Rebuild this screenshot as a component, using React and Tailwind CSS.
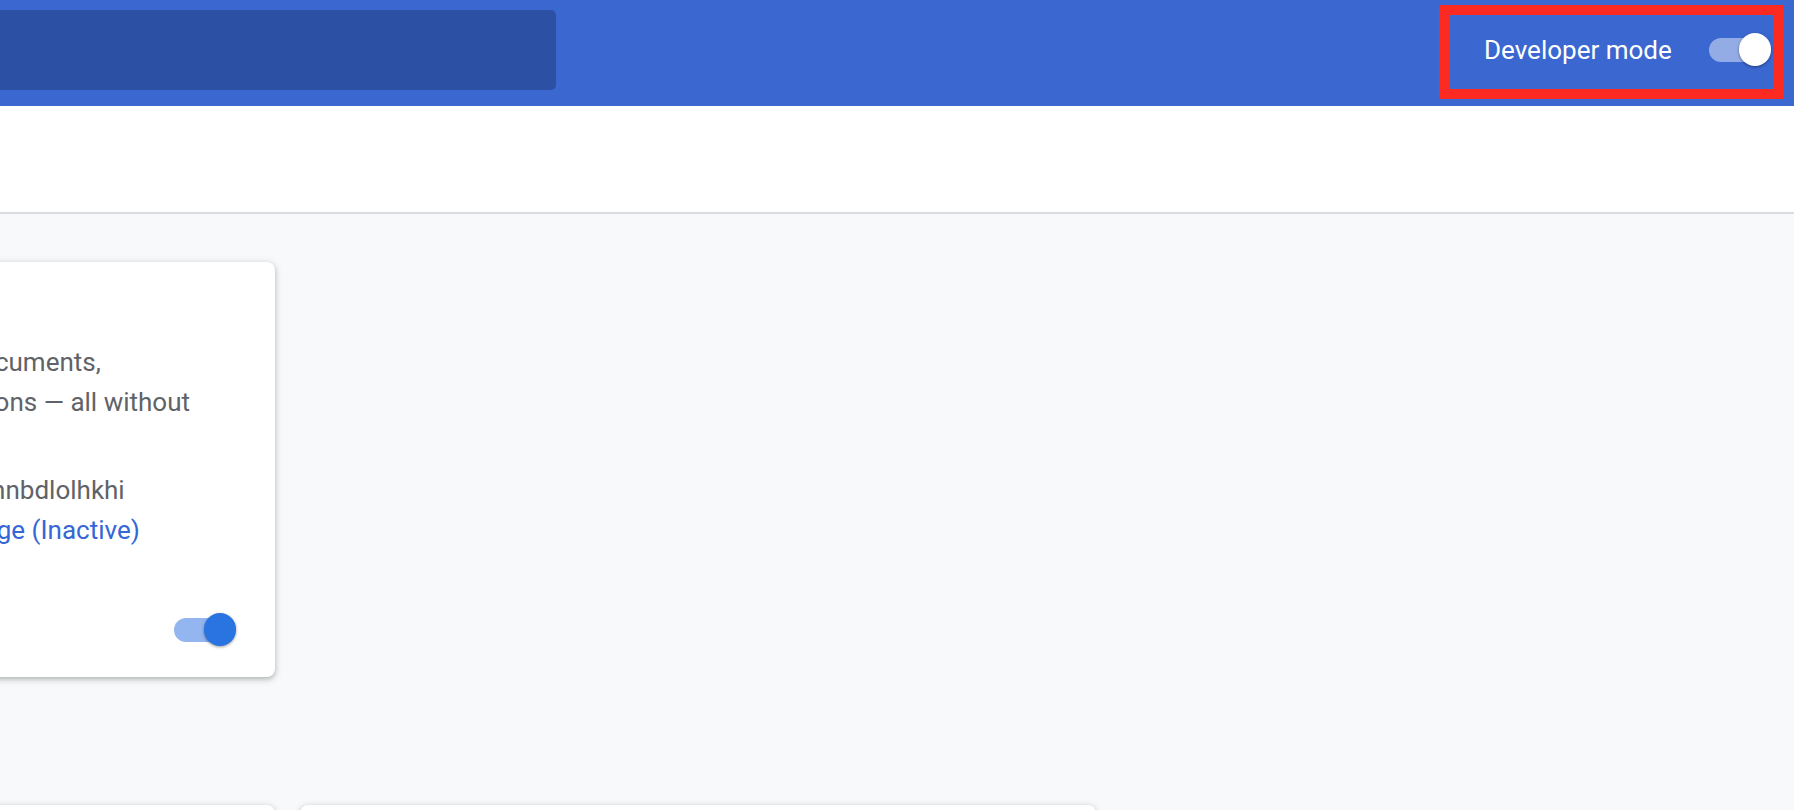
import React from 'react';

function Toggle({ track, knob, knobShadow = 'shadow-[0_1px_3px_rgba(0,0,0,0.4)]' }) {
  return (
    <div className="relative w-[62px] h-[33px] flex items-center">
      <div className={`w-[54px] h-[24px] rounded-full ${track}`}></div>
      <div className={`absolute right-0 top-0 w-[32px] h-[33px] rounded-full ${knob} ${knobShadow}`}></div>
    </div>
  );
}

function ExtensionCard() {
  return (
    <div className="w-[796px] h-[415px] shrink-0 bg-white rounded-lg shadow-[0_2px_4px_0_rgba(60,64,67,0.25),0_2px_6px_2px_rgba(60,64,67,0.12)] flex flex-col pt-[40px] pl-[182px] pr-[39px] pb-[31px]">
      <div className="flex items-center h-[40px] text-[#202124] font-medium">
        <span>Google Docs Offline</span>
        <span className="ml-4 text-[#5f6368] font-normal">1.4</span>
      </div>
      <p className="leading-[40px]">
        Edit, create, and view your documents,
        <br />
        spreadsheets, and presentations — all without
        <br />
        internet access.
      </p>
      <div className="mt-[8px] leading-[40px]">ID: ghbmnnjooekpmoecnnnilnnbdlolhkhi</div>
      <div className="leading-[40px]">
        Inspect views <a className="text-[#3367d6]">background page (Inactive)</a>
      </div>
      <div className="mt-auto flex justify-end">
        <Toggle track="bg-[#93b5f0]" knob="bg-[#2a74e2]" />
      </div>
    </div>
  );
}

export default function App() {
  return (
    <div className="min-h-screen bg-[#f8f9fa] overflow-hidden font-[Roboto,sans-serif] text-[26px] text-[#5f6368]">
      {/* Toolbar */}
      <header className="h-[106px] bg-[#3b67d0] flex">
        <div className="mt-[10px] ml-[-10px] w-[566px] h-[80px] rounded-[5px] bg-[#2c51a4]"></div>
        <div className="flex-1"></div>
        <div className="mt-[5px] mr-[10px] h-[94px] w-[345px] border-[10px] border-[#fc2a21] flex items-center pl-[35px] pr-[3px] pb-[5px]">
          <span className="text-white leading-none">Developer mode</span>
          <div className="ml-auto">
            <Toggle track="bg-[#94ace6]" knob="bg-white" />
          </div>
        </div>
      </header>

      {/* Subheader band */}
      <div className="h-[108px] bg-white border-b-2 border-[#dadce0]"></div>

      {/* Cards */}
      <main className="pt-[48px] ml-[-521px]">
        <ExtensionCard />
        <div className="mt-[128px] flex gap-[25px]">
          <div className="w-[796px] h-[415px] shrink-0 bg-white rounded-lg shadow-[0_2px_4px_0_rgba(60,64,67,0.25),0_2px_6px_2px_rgba(60,64,67,0.12)]"></div>
          <div className="w-[796px] h-[415px] shrink-0 bg-white rounded-lg shadow-[0_2px_4px_0_rgba(60,64,67,0.25),0_2px_6px_2px_rgba(60,64,67,0.12)]"></div>
        </div>
      </main>
    </div>
  );
}
